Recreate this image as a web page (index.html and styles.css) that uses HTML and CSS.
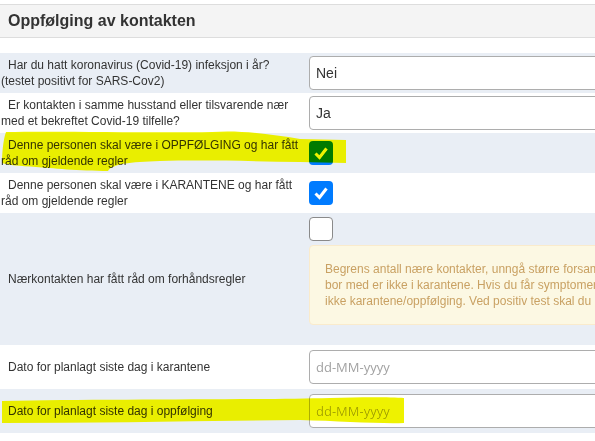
FILE: index.html
```html
<!DOCTYPE html>
<html lang="no">
<head>
<meta charset="utf-8">
<link rel="stylesheet" href="styles.css">
</head>
<body>
<div class="page">
  <div class="panel-heading">Oppfølging av kontakten</div>
  <div class="form">
    <div class="row alt">
      <div class="label">Har du hatt koronavirus (Covid-19) infeksjon i år?<br>(testet positivt for SARS-Cov2)</div>
      <div class="control"><div class="input">Nei</div></div>
    </div>
    <div class="row">
      <div class="label">Er kontakten i samme husstand eller tilsvarende nær<br>med et bekreftet Covid-19 tilfelle?</div>
      <div class="control"><div class="input">Ja</div></div>
    </div>
    <div class="row alt">
      <div class="label">Denne personen skal være i OPPFØLGING og har fått<br>råd om gjeldende regler</div>
      <div class="control"><span class="check on"><svg viewBox="0 0 24 24" width="24" height="24"><path d="M6.5 12.5 L10.5 16.5 L17.5 7.5" fill="none" stroke="#fff" stroke-width="3"/></svg></span></div>
    </div>
    <div class="row">
      <div class="label">Denne personen skal være i KARANTENE og har fått<br>råd om gjeldende regler</div>
      <div class="control"><span class="check on"><svg viewBox="0 0 24 24" width="24" height="24"><path d="M6.5 12.5 L10.5 16.5 L17.5 7.5" fill="none" stroke="#fff" stroke-width="3"/></svg></span></div>
    </div>
    <div class="row alt tall">
      <div class="label">Nærkontakten har fått råd om forhåndsregler</div>
      <div class="control stack">
        <span class="check"></span>
        <div class="alert">Begrens antall nære kontakter, unngå større forsamlinger og hold god avstand til andre. De du<br>bor med er ikke i karantene. Hvis du får symptomer skal du holde deg hjemme og teste deg. Du er<br>ikke karantene/oppfølging. Ved positiv test skal du i isolasjon og følge råd fra kommunen.</div>
      </div>
    </div>
    <div class="row date">
      <div class="label">Dato for planlagt siste dag i karantene</div>
      <div class="control"><div class="input placeholder">dd-MM-yyyy</div></div>
    </div>
    <div class="row alt date">
      <div class="label">Dato for planlagt siste dag i oppfølging</div>
      <div class="control"><div class="input placeholder">dd-MM-yyyy</div></div>
    </div>
  </div>
</div>
<svg class="marker" width="595" height="441" viewBox="0 0 595 441">
  <path d="M6 132 C60 131 150 133 212 132 C240 130 270 134 300 139 L346 140 L346 163 L300 162 C250 161 200 160 160 161 C130 162 112 164 108 171 C80 171 50 168 36 167 C20 166 8 165 2 163 C2 155 3 140 6 132 Z" fill="#eef200"/>
  <path d="M2 401 C100 399 250 400 330 398 C360 397 390 397 404 398 L404 423 C380 424 340 421 300 420 C200 421 100 423 2 423 Z" fill="#eef200"/>
</svg>
</body>
</html>
```

FILE: styles.css
```css
html, body {
  margin: 0;
  padding: 0;
  overflow: hidden;
  background: #fff;
}
body {
  width: 595px;
  height: 441px;
  position: relative;
  font-family: "Liberation Sans", Arial, sans-serif;
  color: #333;
}
.page {
  width: 900px;
}
.panel-heading {
  margin-top: 4px;
  height: 32px;
  line-height: 32px;
  background: #f4f4f4;
  border-top: 1px solid #ddd;
  border-bottom: 1px solid #ddd;
  padding-left: 8px;
  font-size: 16px;
  font-weight: bold;
  color: #333;
}
.form {
  margin-top: 15px;
}
.row {
  display: grid;
  grid-template-columns: 301px 1fr;
  align-items: center;
  min-height: 40px;
}
.row.alt {
  background: #e9eef5;
}
.row.date {
  min-height: 44px;
}
.label {
  font-size: 12px;
  line-height: 16.5px;
  padding-left: 1px;
  text-indent: 7px;
  color: #333;
  white-space: nowrap;
}
.control {
  padding-left: 8px;
  display: flex;
  align-items: center;
}
.control.stack {
  flex-direction: column;
  align-items: flex-start;
  padding-top: 4px;
  padding-bottom: 20px;
  gap: 4px;
}
.input {
  box-sizing: border-box;
  width: 100%;
  height: 34px;
  border: 1px solid #adadad;
  border-radius: 4px;
  background: #fff;
  padding-left: 6px;
  font-size: 14px;
  line-height: 32px;
  color: #333;
}
.input.placeholder {
  font-family: "Open Sans", sans-serif;
  font-size: 13px;
  color: #a2a2a2;
  padding-left: 6px;
}
.check {
  box-sizing: border-box;
  display: block;
  width: 24px;
  height: 24px;
  border-radius: 4px;
  border: 1px solid #8a8a8a;
  background: #fff;
}
.check.on {
  border: none;
  background: #007bff;
}
.check svg {
  display: block;
}
.alert {
  box-sizing: border-box;
  width: 100%;
  height: 80px;
  border: 1px solid #faebcc;
  border-radius: 4px;
  background: #fcf8e3;
  padding: 15px;
  font-size: 12px;
  line-height: 16px;
  color: #c9a163;
  white-space: nowrap;
}
.marker {
  position: absolute;
  left: 0;
  top: 0;
  mix-blend-mode: darken;
  pointer-events: none;
}
```
